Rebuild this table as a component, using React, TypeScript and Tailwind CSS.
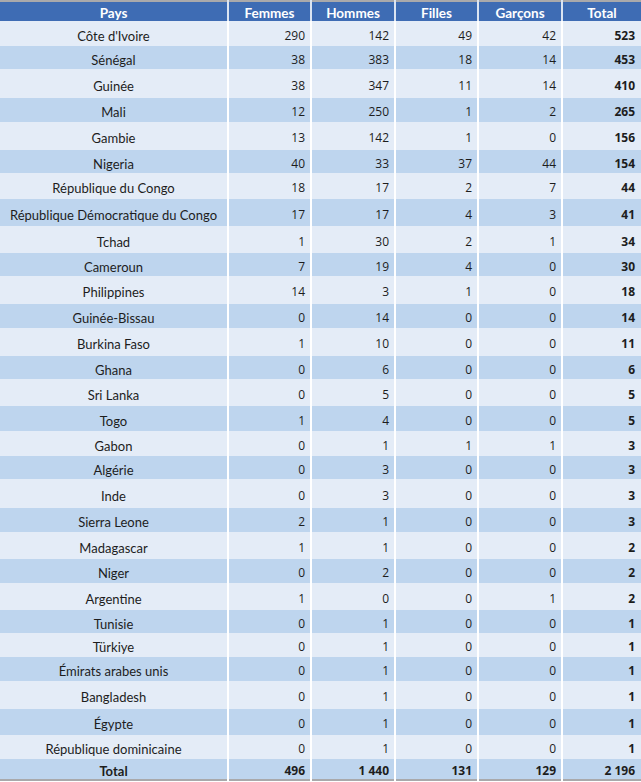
const rows: [string, number, number, number, number, number, number][] = [
  ["Côte d'Ivoire", 290, 142, 49, 42, 523, 25],
  ['Sénégal', 38, 383, 18, 14, 453, 23],
  ['Guinée', 38, 347, 11, 14, 410, 29],
  ['Mali', 12, 250, 1, 2, 265, 24],
  ['Gambie', 13, 142, 1, 0, 156, 28],
  ['Nigeria', 40, 33, 37, 44, 154, 23],
  ['République du Congo', 18, 17, 2, 7, 44, 26],
  ['République Démocratique du Congo', 17, 17, 4, 3, 41, 27],
  ['Tchad', 1, 30, 2, 1, 34, 27],
  ['Cameroun', 7, 19, 4, 0, 30, 23],
  ['Philippines', 14, 3, 1, 0, 18, 28],
  ['Guinée-Bissau', 0, 14, 0, 0, 14, 24],
  ['Burkina Faso', 1, 10, 0, 0, 11, 28],
  ['Ghana', 0, 6, 0, 0, 6, 23],
  ['Sri Lanka', 0, 5, 0, 0, 5, 27],
  ['Togo', 1, 4, 0, 0, 5, 25],
  ['Gabon', 0, 1, 1, 1, 3, 25],
  ['Algérie', 0, 3, 0, 0, 3, 23],
  ['Inde', 0, 3, 0, 0, 3, 29],
  ['Sierra Leone', 2, 1, 0, 0, 3, 24],
  ['Madagascar', 1, 1, 0, 0, 2, 27],
  ['Niger', 0, 2, 0, 0, 2, 24],
  ['Argentine', 1, 0, 0, 1, 2, 27],
  ['Tunisie', 0, 1, 0, 0, 1, 23],
  ['Türkiye', 0, 1, 0, 0, 1, 24],
  ['Émirats arabes unis', 0, 1, 0, 0, 1, 24],
  ['Bangladesh', 0, 1, 0, 0, 1, 28],
  ['Égypte', 0, 1, 0, 0, 1, 26],
  ['République dominicaine', 0, 1, 0, 0, 1, 24],
];

const headers = ['Pays', 'Femmes', 'Hommes', 'Filles', 'Garçons', 'Total'];

const label = "font-['Lato','Liberation_Sans',sans-serif]";
const num = "font-['Open_Sans','Liberation_Sans',sans-serif]";

export default function App() {
  return (
    <div className="w-[641px] bg-white">
      <table className="w-full border-collapse table-fixed border-y-2 border-[#a9a9ab] text-[#1d1d1d]">
        <colgroup>
          <col className="w-[228px]" />
          <col className="w-[83px]" />
          <col className="w-[84px]" />
          <col className="w-[83px]" />
          <col className="w-[84px]" />
          <col className="w-[79px]" />
        </colgroup>
        <thead>
          <tr className="h-[20px] bg-[#3e6cb4]">
            {headers.map((h, i) => (
              <th
                key={h}
                className={`${label} p-0 pt-[3px] text-[13.5px] leading-[16px] font-bold text-white text-center ${i > 0 ? 'border-l-2 border-[#dbe4f1]' : ''}`}
              >
                {h}
              </th>
            ))}
          </tr>
        </thead>
        <tbody>
          {rows.map(([name, f, h, fi, g, t, height], idx) => (
            <tr
              key={name}
              style={{ height }}
              className={idx % 2 === 0 ? 'bg-[#e4ecf7]' : 'bg-[#bed5ee]'}
            >
              <td className={`${label} p-0 pt-[4px] text-[13px] leading-[16px] text-center`}>{name}</td>
              {[f, h, fi, g].map((v, j) => (
                <td key={j} className={`${num} p-0 pt-[4px] pr-[5px] text-[12px] leading-[16px] text-right border-l-2 border-white`}>
                  {v}
                </td>
              ))}
              <td className={`${num} p-0 pt-[4px] pr-[6px] text-[12px] leading-[16px] text-right font-bold border-l-2 border-white`}>
                {t}
              </td>
            </tr>
          ))}
          <tr className="h-[20px] bg-[#bed5ee]">
            <td className={`${label} p-0 pt-[4px] text-[13px] leading-[16px] text-center font-bold`}>Total</td>
            {['496', '1 440', '131', '129'].map((v) => (
              <td key={v} className={`${num} p-0 pt-[4px] pr-[5px] text-[12px] leading-[16px] text-right font-bold border-l-2 border-white`}>
                {v}
              </td>
            ))}
            <td className={`${num} p-0 pt-[4px] pr-[6px] text-[12px] leading-[16px] text-right font-bold border-l-2 border-white`}>
              2 196
            </td>
          </tr>
        </tbody>
      </table>
    </div>
  );
}
